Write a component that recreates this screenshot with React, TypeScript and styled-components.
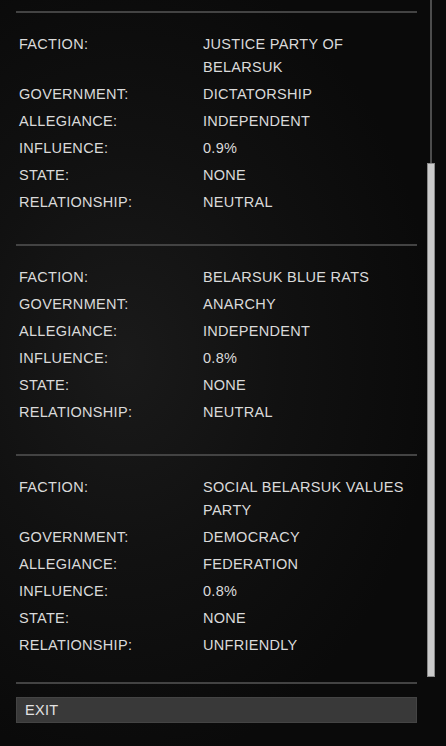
import React from 'react'
import styled, { createGlobalStyle } from 'styled-components'

const GlobalStyle = createGlobalStyle`
  html, body {
    margin: 0;
    padding: 0;
    background: #0b0b0b;
  }
  * {
    box-sizing: border-box;
  }
`

const Page = styled.div`
  display: flex;
  width: 446px;
  height: 746px;
  padding-left: 16px;
  overflow: hidden;
  background: radial-gradient(ellipse 70% 55% at 28% 48%, #1a1a1a 0%, #111111 50%, #0a0a0a 100%);
  font-family: 'Liberation Sans', Arial, sans-serif;
  font-size: 14.5px;
  color: #dadada;
  text-transform: uppercase;
`

const MainColumn = styled.div`
  display: flex;
  flex-direction: column;
  width: 401px;
`

const Viewport = styled.div`
  height: 682px;
  padding-top: 11px;
  overflow: hidden;
`

const Section = styled.section`
  border-top: 2px solid #434343;
  padding: 20px 0 30px;
  display: flex;
  flex-direction: column;
  gap: 4px;
`

const Row = styled.div`
  display: grid;
  grid-template-columns: 187px 1fr;
  line-height: 23px;
  letter-spacing: 0.3px;
`

const Label = styled.span`
  padding-left: 3px;
`

const Value = styled.span`
  padding-right: 2px;
`

const Divider = styled.div`
  height: 2px;
  background: #434343;
`

const ExitButton = styled.button`
  margin-top: 13px;
  height: 26px;
  padding: 0 0 0 8px;
  border: 1px solid #444444;
  background: #393939;
  color: #e2e2e2;
  font: inherit;
  text-transform: uppercase;
  text-align: left;
  letter-spacing: 0.3px;
  cursor: pointer;
`

const Scrollbar = styled.div`
  display: flex;
  flex-direction: column;
  align-items: center;
  width: 8px;
  margin-left: 10px;
`

const Track = styled.div`
  width: 2px;
  height: 163px;
  background: #4d4d4d;
`

const Thumb = styled.div`
  width: 8px;
  height: 514px;
  background: #cbcbcb;
  border: 1px solid #8a8a8a;
`

type Faction = {
  name: string
  government: string
  allegiance: string
  influence: string
  state: string
  relationship: string
}

const factions: Faction[] = [
  {
    name: 'Justice Party of Belarsuk',
    government: 'Dictatorship',
    allegiance: 'Independent',
    influence: '0.9%',
    state: 'None',
    relationship: 'Neutral',
  },
  {
    name: 'Belarsuk Blue Rats',
    government: 'Anarchy',
    allegiance: 'Independent',
    influence: '0.8%',
    state: 'None',
    relationship: 'Neutral',
  },
  {
    name: 'Social Belarsuk Values Party',
    government: 'Democracy',
    allegiance: 'Federation',
    influence: '0.8%',
    state: 'None',
    relationship: 'Unfriendly',
  },
]

const FactionBlock = ({ faction }: { faction: Faction }) => {
  const rows: [string, string][] = [
    ['Faction:', faction.name],
    ['Government:', faction.government],
    ['Allegiance:', faction.allegiance],
    ['Influence:', faction.influence],
    ['State:', faction.state],
    ['Relationship:', faction.relationship],
  ]
  return (
    <Section>
      {rows.map(([label, value]) => (
        <Row key={label}>
          <Label>{label}</Label>
          <Value>{value}</Value>
        </Row>
      ))}
    </Section>
  )
}

const App = () => (
  <>
    <GlobalStyle />
    <Page>
      <MainColumn>
        <Viewport>
          {factions.map((f) => (
            <FactionBlock key={f.name} faction={f} />
          ))}
        </Viewport>
        <Divider />
        <ExitButton>Exit</ExitButton>
      </MainColumn>
      <Scrollbar>
        <Track />
        <Thumb />
      </Scrollbar>
    </Page>
  </>
)

export default App
